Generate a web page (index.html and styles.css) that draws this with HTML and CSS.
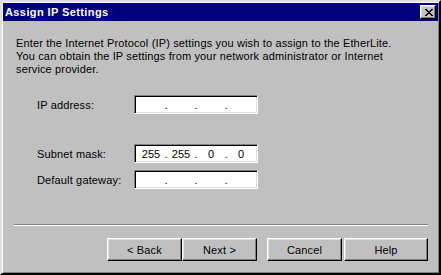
FILE: index.html
```html
<!DOCTYPE html>
<html lang="en">
<head>
  <meta charset="UTF-8">
  <title>Assign IP Settings</title>
  <link rel="stylesheet" href="styles.css">
</head>
<body>

  <!-- Dialog Window -->
  <div class="window">

    <!-- Title Bar -->
    <div class="title-bar">
      <div class="title">Assign IP Settings</div>
      <button class="close-btn" aria-label="Close">
        <svg width="8" height="7" viewBox="0 0 8 7" shape-rendering="crispEdges">
          <path d="M0 0h2v1H0zM6 0h2v1H6zM1 1h2v1H1zM5 1h2v1H5zM2 2h4v1H2zM3 3h2v1H3zM2 4h4v1H2zM1 5h2v1H1zM5 5h2v1H5zM0 6h2v1H0zM6 6h2v1H6z" fill="#000"/>
        </svg>
      </button>
    </div>

    <!-- Content -->
    <div class="content">
      <p class="intro">
        Enter the Internet Protocol (IP) settings you wish to assign to the EtherLite.<br>
        You can obtain the IP settings from your network administrator or Internet<br>
        service provider.
      </p>

      <div class="form">
        <label class="ip-row">IP address:</label>
        <div class="ip-field ip-row">
          <span class="octet">&nbsp;</span><span class="dot">.</span>
          <span class="octet">&nbsp;</span><span class="dot">.</span>
          <span class="octet">&nbsp;</span><span class="dot">.</span>
          <span class="octet">&nbsp;</span>
        </div>

        <label>Subnet mask:</label>
        <div class="ip-field">
          <span class="octet">255</span><span class="dot">.</span>
          <span class="octet">255</span><span class="dot">.</span>
          <span class="octet">0</span><span class="dot">.</span>
          <span class="octet">0</span>
        </div>

        <label>Default gateway:</label>
        <div class="ip-field">
          <span class="octet">&nbsp;</span><span class="dot">.</span>
          <span class="octet">&nbsp;</span><span class="dot">.</span>
          <span class="octet">&nbsp;</span><span class="dot">.</span>
          <span class="octet">&nbsp;</span>
        </div>
      </div>

      <div class="separator"></div>

      <!-- Wizard Buttons -->
      <div class="button-row">
        <button class="btn">&lt; Back</button>
        <button class="btn">Next &gt;</button>
        <button class="btn cancel">Cancel</button>
        <button class="btn help">Help</button>
      </div>
    </div>

  </div>

</body>
</html>
```

FILE: styles.css
```css
body {
  margin: 0;
  padding: 0;
  background-color: #c0c0c0;
  font-family: "Liberation Sans", Arial, sans-serif;
  font-size: 11px;
  letter-spacing: 0.15px;
  color: black;
}
/* Window Frame */
.window {
  width: 441px;
  height: 275px;
  box-sizing: border-box;
  padding: 1px;
  background-color: #c0c0c0;
  border: 2px solid;
  border-color: #dfdfdf black black #dfdfdf;
  box-shadow: inset 1px 1px white, inset -1px -1px #808080;
}
/* Title Bar */
.title-bar {
  height: 18px;
  background-color: #000080;
  display: flex;
  align-items: center;
  justify-content: space-between;
  padding: 0 2px;
}
.title {
  color: white;
  font-weight: bold;
  font-size: 11px;
  letter-spacing: 0.4px;
}
.close-btn {
  width: 16px;
  height: 14px;
  padding: 0;
  box-sizing: border-box;
  background-color: #c0c0c0;
  border: 1px solid;
  border-color: white black black white;
  box-shadow: inset -1px -1px #808080, inset 1px 1px #dfdfdf;
  display: flex;
  align-items: center;
  justify-content: center;
}
.close-btn svg {
  display: block;
  margin-left: 1px;
}
/* Content */
.content {
  padding: 16px 10px 0 11px;
}
.intro {
  margin: 0 0 0 2px;
  line-height: 13px;
}
.form {
  display: grid;
  grid-template-columns: 97px 124px;
  row-gap: 7px;
  align-items: center;
  margin: 19px 0 0 23px;
}
.form .ip-row {
  margin-bottom: 23px;
}
.ip-field {
  height: 19px;
  box-sizing: border-box;
  background-color: white;
  border: 1px solid;
  border-color: #808080 white white #808080;
  box-shadow: inset 1px 1px black, inset -1px -1px #dfdfdf;
  display: flex;
  align-items: center;
  padding: 1px 1px 0 3px;
  line-height: 13px;
  letter-spacing: 0;
}
.octet {
  width: 26px;
  text-align: center;
}
.dot {
  width: 4px;
  text-align: center;
  color: black;
}
/* Separator */
.separator {
  margin-top: 35px;
  border-top: 1px solid #808080;
  border-bottom: 1px solid white;
}
/* Buttons */
.button-row {
  display: flex;
  justify-content: flex-end;
  margin-top: 12px;
}
.btn {
  width: 75px;
  height: 23px;
  box-sizing: border-box;
  padding: 0;
  font-family: "Liberation Sans", Arial, sans-serif;
  font-size: 11px;
  letter-spacing: 0.15px;
  color: black;
  background-color: #c0c0c0;
  border: 1px solid;
  border-color: white black black white;
  box-shadow: inset -1px -1px #808080, inset 1px 1px #dfdfdf;
}
.btn.cancel {
  margin-left: 10px;
}
.btn.help {
  width: 84px;
  margin-left: 2px;
}
```
